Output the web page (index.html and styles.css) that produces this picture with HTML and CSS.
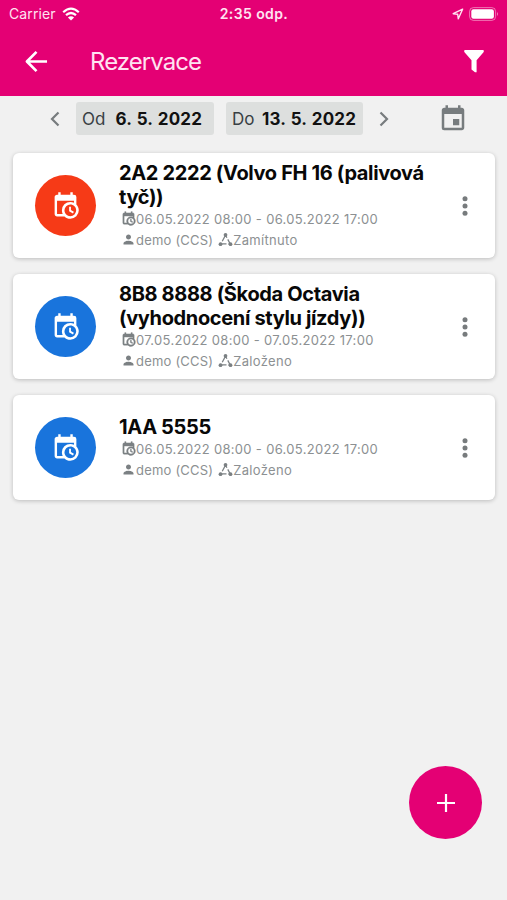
FILE: index.html
```html
<!DOCTYPE html>
<html lang="cs">
<head>
  <meta charset="UTF-8" />
  <meta name="viewport" content="width=device-width, initial-scale=1.0" />
  <title>Rezervace</title>
  <link rel="stylesheet" href="styles.css">
</head>
<body>

  <!-- Shared icons -->
  <svg class="sprite" aria-hidden="true">
    <symbol id="calendar-clock" viewBox="0 0 24 24">
      <path d="M15,13H16.5V15.82L18.94,17.23L18.19,18.53L15,16.69V13M19,8H5V19H9.67C9.24,18.09 9,17.07 9,16A7,7 0 0,1 16,9C17.07,9 18.09,9.24 19,9.67V8M5,21C3.89,21 3,20.1 3,19V5C3,3.89 3.89,3 5,3H6V1H8V3H16V1H18V3H19A2,2 0 0,1 21,5V11.1C22.24,12.36 23,14.09 23,16A7,7 0 0,1 16,23C14.09,23 12.36,22.24 11.1,21H5M16,11.15A4.85,4.85 0 0,0 11.15,16C11.15,18.68 13.32,20.85 16,20.85A4.85,4.85 0 0,0 20.85,16C20.85,13.32 18.68,11.15 16,11.15Z"/>
    </symbol>
    <symbol id="person" viewBox="0 0 24 24">
      <path d="M12 12c2.21 0 4-1.79 4-4s-1.79-4-4-4-4 1.79-4 4 1.79 4 4 4zm0 2c-2.67 0-8 1.34-8 4v2h16v-2c0-2.66-5.33-4-8-4z"/>
    </symbol>
    <symbol id="state" viewBox="0 0 24 24">
      <path d="M12 5L4.500 19H19.500Z" fill="none" stroke="currentColor" stroke-width="2" stroke-dasharray="11 3"/>
      <circle cx="12" cy="4.500" r="3"/>
      <circle cx="4" cy="19.500" r="3"/>
      <circle cx="20" cy="19.500" r="3"/>
    </symbol>
    <symbol id="dots" viewBox="0 0 6 22">
      <circle cx="3" cy="3.800" r="2.500"/>
      <circle cx="3" cy="11" r="2.500"/>
      <circle cx="3" cy="18.200" r="2.500"/>
    </symbol>
  </svg>

  <!-- Status bar -->
  <div class="status-bar">
    <div class="carrier">
      <span>Carrier</span>
      <svg class="wifi" viewBox="0 0 18 14">
        <path d="M1.200 5.200Q9 -2 16.800 5.200M4 8.200Q9 3.800 14 8.200" fill="none" stroke="currentColor" stroke-width="2.200"/>
        <path d="M9 13.500L5.900 10.400Q9 7.900 12.100 10.400Z"/>
      </svg>
    </div>
    <div class="time">2:35 odp.</div>
    <div class="status-icons">
      <svg class="location" viewBox="0 0 12 12">
        <path d="M10.600 1.200L1.200 5.700L5.700 6.300L6.300 10.800Z" fill="none" stroke="currentColor" stroke-width="1.400" stroke-linejoin="round"/>
      </svg>
      <svg class="battery" viewBox="0 0 30 14">
        <rect x=".6" y=".6" width="26" height="12.800" rx="3.800" fill="none" stroke="currentColor" stroke-opacity=".45"/>
        <rect x="2.300" y="2.300" width="22.600" height="9.400" rx="2.200"/>
        <path d="M28 5Q30 7 28 9Z" opacity=".5"/>
      </svg>
    </div>
  </div>

  <!-- Header -->
  <header>
    <svg class="back" viewBox="0 0 24 24">
      <path d="M12 2L2 12L12 22M2.500 12H23" fill="none" stroke="currentColor" stroke-width="2.800" stroke-linejoin="round"/>
    </svg>
    <h1>Rezervace</h1>
    <svg class="filter" viewBox="0 0 20 23">
      <path d="M.8 0H19.200Q20.400 .8 19.500 2.200L12.600 10.300V22.300H11L7.500 19.600V10.300L.5 2.200Q-.4 .8 .8 0Z"/>
    </svg>
  </header>

  <!-- Date range -->
  <div class="dates">
    <svg class="chevron" viewBox="0 0 10 16"><path d="M8.500 1.500L2 8L8.500 14.500" fill="none" stroke="currentColor" stroke-width="2.200"/></svg>
    <div class="date"><span>Od</span><b>6. 5. 2022</b></div>
    <div class="date"><span>Do</span><b>13. 5. 2022</b></div>
    <svg class="chevron" viewBox="0 0 10 16"><path d="M1.500 1.500L8 8L1.500 14.500" fill="none" stroke="currentColor" stroke-width="2.200"/></svg>
    <svg class="calendar" viewBox="0 0 24 24">
      <path d="M17 12h-5v5h5v-5zM16 1v2H8V1H6v2H5c-1.110 0-1.990.9-1.990 2L3 19a2 2 0 0 0 2 2h14c1.100 0 2-.9 2-2V5c0-1.100-.9-2-2-2h-1V1h-2zm3 18H5V8h14v11z"/>
    </svg>
  </div>

  <!-- Reservations -->
  <main>
    <div class="card">
      <div class="circle rejected"><svg><use href="#calendar-clock"/></svg></div>
      <div class="info">
        <h2>2A2 2222 (Volvo FH 16 (palivová tyč))</h2>
        <p><svg class="bold"><use href="#calendar-clock"/></svg><span>06.05.2022 08:00 - 06.05.2022 17:00</span></p>
        <p><svg><use href="#person"/></svg><span class="user">demo (CCS)</span><svg><use href="#state"/></svg><span>Zamítnuto</span></p>
      </div>
      <svg class="more"><use href="#dots"/></svg>
    </div>

    <div class="card">
      <div class="circle"><svg><use href="#calendar-clock"/></svg></div>
      <div class="info">
        <h2>8B8 8888 (Škoda Octavia (vyhodnocení stylu jízdy))</h2>
        <p><svg class="bold"><use href="#calendar-clock"/></svg><span>07.05.2022 08:00 - 07.05.2022 17:00</span></p>
        <p><svg><use href="#person"/></svg><span class="user">demo (CCS)</span><svg><use href="#state"/></svg><span>Založeno</span></p>
      </div>
      <svg class="more"><use href="#dots"/></svg>
    </div>

    <div class="card">
      <div class="circle"><svg><use href="#calendar-clock"/></svg></div>
      <div class="info">
        <h2>1AA 5555</h2>
        <p><svg class="bold"><use href="#calendar-clock"/></svg><span>06.05.2022 08:00 - 06.05.2022 17:00</span></p>
        <p><svg><use href="#person"/></svg><span class="user">demo (CCS)</span><svg><use href="#state"/></svg><span>Založeno</span></p>
      </div>
      <svg class="more"><use href="#dots"/></svg>
    </div>
  </main>

  <!-- Add button -->
  <button class="add" aria-label="Přidat">
    <svg viewBox="0 0 18 18"><path d="M9 0V18M0 9H18" stroke="currentColor" stroke-width="2.200"/></svg>
  </button>

</body>
</html>
```
FILE: styles.css
```css
* {
  margin: 0;
  padding: 0;
  box-sizing: border-box;
}
body {
  height: 900px;
  background-color: #f1f1f1;
  font-family: Inter, "Liberation Sans", sans-serif;
  overflow: hidden;
}
svg {
  display: block;
  flex: none;
  fill: currentColor;
}
.sprite {
  display: none;
}
/* Status bar */
.status-bar {
  display: grid;
  grid-template-columns: 1fr auto 1fr;
  align-items: center;
  height: 27px;
  padding: 0 8px 0 9px;
  background-color: #e40074;
  color: #ffe3f1;
  font-size: 14px;
}
.carrier {
  display: flex;
  align-items: center;
  gap: 6px;
  letter-spacing: 0.1px;
}
.wifi {
  width: 18px;
  height: 14px;
  color: white;
}
.time {
  font-weight: 600;
  letter-spacing: 0.4px;
}
.status-icons {
  display: flex;
  justify-content: flex-end;
  align-items: center;
  gap: 5px;
}
.location {
  width: 12px;
  height: 12px;
}
.battery {
  width: 30px;
  height: 14px;
  color: white;
}
/* Header */
header {
  display: flex;
  align-items: center;
  height: 69px;
  padding: 0 23px 0 25px;
  background-color: #e40074;
  color: white;
}
.back {
  width: 23px;
  height: 23px;
}
h1 {
  flex: 1;
  margin-left: 42px;
  color: #ffe3f1;
  font-size: 24px;
  font-weight: 400;
  letter-spacing: -0.95px;
}
.filter {
  width: 20px;
  height: 23px;
}
/* Date range */
.dates {
  display: flex;
  align-items: center;
  height: 45px;
  padding-left: 50px;
  color: #777c7e;
}
.chevron {
  width: 10px;
  height: 16px;
}
.date {
  display: flex;
  justify-content: space-between;
  align-items: center;
  width: 138px;
  height: 33px;
  margin-left: 16px;
  padding: 0 12px 0 6px;
  border-radius: 3px;
  background-color: #dddfde;
  color: #384044;
  font-size: 17px;
}
.date + .date {
  width: 137px;
  margin: 0 16px 0 12px;
  padding-right: 7px;
}
.date b {
  color: #111;
  font-weight: 700;
  letter-spacing: 0.15px;
  word-spacing: 1px;
}
.calendar {
  width: 30px;
  height: 30px;
  margin-left: 49px;
}
/* Reservation cards */
main {
  display: flex;
  flex-direction: column;
  gap: 16px;
  padding: 12px 12px 0 13px;
}
.card {
  display: flex;
  align-items: center;
  height: 105px;
  padding: 0 27px 0 22px;
  border-radius: 6px;
  background-color: white;
  box-shadow: 0 1px 4px rgba(0, 0, 0, 0.22);
}
.circle {
  display: flex;
  justify-content: center;
  align-items: center;
  width: 61px;
  height: 61px;
  border-radius: 50%;
  background-color: #1974dc;
  color: white;
}
.circle svg {
  width: 29px;
  height: 29px;
}
.rejected {
  background-color: #f63a17;
}
.info {
  flex: 1;
  margin-left: 23px;
}
h2 {
  width: 325px;
  margin-bottom: -1px;
  font-size: 20px;
  font-weight: 700;
  line-height: 24px;
  letter-spacing: -0.35px;
  color: #080808;
}
.info p {
  display: flex;
  align-items: center;
  height: 21px;
  padding-left: 2px;
  color: #8c9092;
  font-size: 13px;
  letter-spacing: 0.32px;
  white-space: nowrap;
}
.info p svg {
  width: 15px;
  height: 15px;
  color: #7b8083;
}
.info p .bold {
  stroke: currentColor;
  stroke-width: 0.7;
}
.user {
  margin-right: 5px;
  letter-spacing: 0.2px;
}
.more {
  width: 6px;
  height: 22px;
  color: #777b7d;
}
/* Add button */
.add {
  position: fixed;
  right: 25px;
  bottom: 61px;
  display: flex;
  justify-content: center;
  align-items: center;
  width: 73px;
  height: 73px;
  border: none;
  border-radius: 50%;
  background-color: #e40074;
  color: white;
}
.add svg {
  width: 18px;
  height: 18px;
}
```
